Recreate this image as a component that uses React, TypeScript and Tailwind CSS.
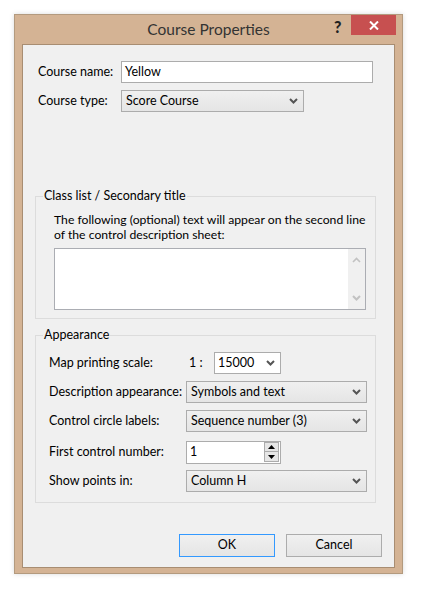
import React from "react";

const font = { fontFamily: 'Lato, "Noto Sans", sans-serif' };

const Chevron = ({ color = "#555" }: { color?: string }) => (
  <svg width="9" height="6" viewBox="0 0 9 6">
    <path d="M1 1 L4.5 4.5 L8 1" fill="none" stroke={color} strokeWidth="2" />
  </svg>
);

const Select = ({ value, className }: { value: string; className: string }) => (
  <div
    className={`flex items-center justify-between h-[22px] border border-[#acacac] bg-gradient-to-b from-[#f0f0f0] to-[#e5e5e5] pl-[4px] pr-[5px] ${className}`}
  >
    <span className="pt-[1px] text-[12.5px] leading-none text-black whitespace-nowrap">{value}</span>
    <Chevron />
  </div>
);

const Row = ({ label, children, mt }: { label: string; children: React.ReactNode; mt: string }) => (
  <div className={`flex items-center h-[22px] ${mt}`}>
    <span className="w-[137px] text-[12.5px] text-black whitespace-nowrap">{label}</span>
    {children}
  </div>
);

export default function App() {
  return (
    <div className="w-[421px] h-[593px] bg-white pt-[14px] pl-[14px]" style={font}>
      <div className="w-[389px] h-[560px] bg-[#d4b394] border border-[#b39a7e] shadow-[0_0_5px_rgba(0,0,0,0.15)] flex flex-col">
        {/* title bar */}
        <div className="relative h-[29px] flex items-center justify-center">
          <span className="text-[15.5px] text-[#333] leading-none">Course Properties</span>
          <span className="absolute left-[319px] top-[2px] text-[16px] leading-[20px] font-black text-[#222]">?</span>
          <div className="absolute right-[6px] top-0 w-[45px] h-[20px] bg-[#c75050] flex items-center justify-center">
            <svg width="10" height="9" viewBox="0 0 10 9">
              <path d="M1 0.5 L9 8.5 M9 0.5 L1 8.5" stroke="white" strokeWidth="2" />
            </svg>
          </div>
        </div>

        {/* client area */}
        <div className="mx-[7px] h-[524px] border border-[#a88d72] bg-[#f0f0f0] px-[12px] flex flex-col">
          <div className="flex items-center h-[22px] mt-[16px] ml-[3px]">
            <span className="w-[83px] text-[12.5px] text-black whitespace-nowrap">Course name:</span>
            <div className="w-[252px] h-[22px] border border-[#acacac] bg-white flex items-center pl-[3px] pt-[1px] text-[12.5px] text-black">
              Yellow
            </div>
          </div>
          <div className="flex items-center h-[22px] mt-[7px] ml-[3px]">
            <span className="w-[83px] text-[12.5px] text-black whitespace-nowrap">Course type:</span>
            <Select value="Score Course" className="w-[183px]" />
          </div>

          <fieldset className="mt-[76px] w-[341px] h-[131px] border border-[#dcdcdc] pl-[18px]">
            <legend className="px-[1px] text-[12.5px] leading-[16px] text-black -ml-[11px] whitespace-nowrap">
              Class list / Secondary title
            </legend>
            <p className="mt-[8px] text-[12.2px] leading-[15px] text-black whitespace-nowrap">
              The following (optional) text will appear on the second line
              <br />
              of the control description sheet:
            </p>
            <div className="mt-[6px] w-[312px] h-[62px] border border-[#abadb3] bg-white flex justify-end">
              <div className="w-[17px] h-full bg-[#f0f0f0] flex flex-col items-center justify-between py-[8px]">
                <svg width="9" height="6" viewBox="0 0 9 6">
                  <path d="M1 5 L4.5 1.5 L8 5" fill="none" stroke="#c2c2c2" strokeWidth="1.6" />
                </svg>
                <Chevron color="#c2c2c2" />
              </div>
            </div>
          </fieldset>

          <fieldset className="mt-[8px] w-[341px] h-[176px] border border-[#dcdcdc] pl-[13px]">
            <legend className="px-[1px] text-[12.5px] leading-[16px] text-black -ml-[6px]">Appearance</legend>
            <Row label="Map printing scale:" mt="mt-[9px]">
              <span className="w-[28px] pl-[3px] text-[12.5px] text-black whitespace-nowrap">1 :</span>
              <div className="w-[67px] h-[22px] border border-[#acacac] bg-white flex items-center justify-between pl-[3px] pr-[5px]">
                <span className="pt-[1px] text-[12.5px] leading-none text-black">15000</span>
                <Chevron />
              </div>
            </Row>
            <Row label="Description appearance:" mt="mt-[7px]">
              <Select value="Symbols and text" className="w-[181px]" />
            </Row>
            <Row label="Control circle labels:" mt="mt-[7px]">
              <Select value="Sequence number (3)" className="w-[181px]" />
            </Row>
            <Row label="First control number:" mt="mt-[9px]">
              <div className="w-[95px] h-[23px] border border-[#acacac] bg-white flex items-center justify-between pl-[3px] pr-[1px]">
                <span className="pt-[1px] text-[12.5px] leading-none text-black">1</span>
                <div className="w-[15px] h-[20px] flex flex-col">
                  <div className="h-[10px] bg-[#e6e6e6] border border-[#acacac] flex items-center justify-center">
                    <svg width="7" height="4" viewBox="0 0 7 4">
                      <path d="M0 4 L3.5 0 L7 4 Z" fill="#000" />
                    </svg>
                  </div>
                  <div className="h-[10px] bg-[#e6e6e6] border border-t-0 border-[#acacac] flex items-center justify-center">
                    <svg width="7" height="4" viewBox="0 0 7 4">
                      <path d="M0 0 L3.5 4 L7 0 Z" fill="#000" />
                    </svg>
                  </div>
                </div>
              </div>
            </Row>
            <Row label="Show points in:" mt="mt-[7px]">
              <Select value="Column H" className="w-[181px]" />
            </Row>
          </fieldset>

          <div className="mt-[31px] flex justify-end gap-[11px]">
            <button className="w-[96px] h-[23px] border border-[#3399ff] bg-gradient-to-b from-[#f0f0f0] to-[#e5e5e5] text-[12.5px] text-black">
              OK
            </button>
            <button className="w-[96px] h-[23px] border border-[#acacac] bg-gradient-to-b from-[#f0f0f0] to-[#e5e5e5] text-[12.5px] text-black">
              Cancel
            </button>
          </div>
        </div>
      </div>
    </div>
  );
}
